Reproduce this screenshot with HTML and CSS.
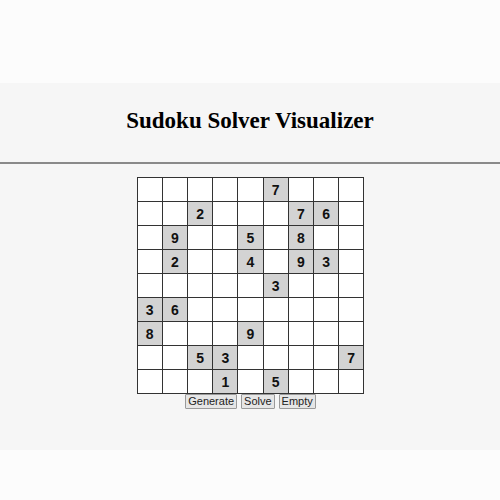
FILE: index.html
```html
<!DOCTYPE html>
<html>
<head>
<meta charset="utf-8">
<title>Sudoku Solver Visualizer</title>
<link rel="stylesheet" href="styles.css">
</head>
<body>
<div class="top"></div>
<div class="main">
  <h1 class="title">Sudoku Solver Visualizer</h1>
  <div class="rule"></div>
  <div class="board-wrap">
    <div class="board">
      <div class="cell"></div><div class="cell"></div><div class="cell"></div><div class="cell"></div><div class="cell"></div><div class="cell given">7</div><div class="cell"></div><div class="cell"></div><div class="cell"></div>
      <div class="cell"></div><div class="cell"></div><div class="cell given">2</div><div class="cell"></div><div class="cell"></div><div class="cell"></div><div class="cell given">7</div><div class="cell given">6</div><div class="cell"></div>
      <div class="cell"></div><div class="cell given">9</div><div class="cell"></div><div class="cell"></div><div class="cell given">5</div><div class="cell"></div><div class="cell given">8</div><div class="cell"></div><div class="cell"></div>
      <div class="cell"></div><div class="cell given">2</div><div class="cell"></div><div class="cell"></div><div class="cell given">4</div><div class="cell"></div><div class="cell given">9</div><div class="cell given">3</div><div class="cell"></div>
      <div class="cell"></div><div class="cell"></div><div class="cell"></div><div class="cell"></div><div class="cell"></div><div class="cell given">3</div><div class="cell"></div><div class="cell"></div><div class="cell"></div>
      <div class="cell given">3</div><div class="cell given">6</div><div class="cell"></div><div class="cell"></div><div class="cell"></div><div class="cell"></div><div class="cell"></div><div class="cell"></div><div class="cell"></div>
      <div class="cell given">8</div><div class="cell"></div><div class="cell"></div><div class="cell"></div><div class="cell given">9</div><div class="cell"></div><div class="cell"></div><div class="cell"></div><div class="cell"></div>
      <div class="cell"></div><div class="cell"></div><div class="cell given">5</div><div class="cell given">3</div><div class="cell"></div><div class="cell"></div><div class="cell"></div><div class="cell"></div><div class="cell given">7</div>
      <div class="cell"></div><div class="cell"></div><div class="cell"></div><div class="cell given">1</div><div class="cell"></div><div class="cell given">5</div><div class="cell"></div><div class="cell"></div><div class="cell"></div>
    </div>
  </div>
  <div class="controls">
    <button class="btn">Generate</button>
    <button class="btn">Solve</button>
    <button class="btn">Empty</button>
  </div>
</div>
</body>
</html>
```
FILE: styles.css
```css
html, body {
  margin: 0;
  padding: 0;
  background: #fcfcfc;
}
body {
  width: 500px;
  height: 500px;
  overflow: hidden;
}
.top {
  height: 83px;
}
.main {
  height: 367px;
  box-sizing: border-box;
  padding-top: 25px;
  background: #f6f6f6;
}
.title {
  margin: 0;
  text-align: center;
  font-family: "Liberation Serif", "Times New Roman", serif;
  font-weight: bold;
  font-size: 23px;
  line-height: 26px;
  color: #000;
}
.rule {
  margin-top: 28px;
  height: 2px;
  background: #8a8a8a;
}
.board-wrap {
  display: flex;
  justify-content: center;
  margin-top: 13px;
  padding-left: 1px;
}
.board {
  display: grid;
  grid-template-columns: repeat(9, 25.2px);
  grid-template-rows: repeat(9, 24px);
  border-left: 1px solid #333;
  border-top: 1px solid #333;
  background: #ffffff;
}
.cell {
  box-sizing: border-box;
  border-right: 1px solid #333;
  border-bottom: 1px solid #333;
  display: flex;
  align-items: center;
  justify-content: center;
  font-family: "Liberation Sans", Arial, sans-serif;
  font-weight: bold;
  font-size: 14px;
  color: #111;
}
.given {
  background: #d3d3d3;
}
.controls {
  display: flex;
  justify-content: center;
  gap: 4px;
  padding-left: 1px;
}
.btn {
  margin: 0;
  height: 15px;
  padding: 0 2px;
  border: 1px solid #9a9a9a;
  border-radius: 1px;
  background: #e6e6e6;
  font-family: "Liberation Sans", Arial, sans-serif;
  font-size: 11px;
  line-height: 13px;
  color: #222;
}
```
